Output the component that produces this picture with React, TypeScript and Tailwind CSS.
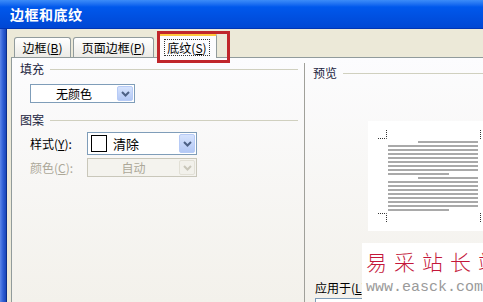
import React from 'react';

const cjk = { fontFamily: '"Noto Sans CJK SC", "Liberation Sans", sans-serif' };

function Chevron({ muted = false }: { muted?: boolean }) {
  return (
    <svg width="9" height="6" viewBox="0 0 9 6">
      <polyline
        points="1,1 4.5,4.5 8,1"
        fill="none"
        stroke={muted ? '#C9C7BA' : '#4D6185'}
        strokeWidth="2"
      />
    </svg>
  );
}

function ArrowButton({ muted = false, h }: { muted?: boolean; h: string }) {
  return (
    <div
      className={`w-[16px] ${h} flex items-center justify-center rounded-[2px] border ${
        muted
          ? 'border-[#E2E0D6] bg-[#F2F1EB]'
          : 'border-[#B7CBF6] bg-gradient-to-b from-[#D6E3FD] to-[#B3C8F5]'
      }`}
    >
      <Chevron muted={muted} />
    </div>
  );
}

function GroupHeader({ title }: { title: string }) {
  return (
    <div className="flex items-center h-[12px] pl-[8px] shrink-0">
      <span className="text-[12px] leading-[12px] text-[#1B2440]">{title}</span>
      <div className="flex-1 h-px bg-[#D0D0BF] ml-[6px]" />
    </div>
  );
}

function PreviewPage() {
  const lines = Array.from({ length: 18 }, (_, i) => {
    const first = i === 0 || i === 9;
    const last = i === 8 || i === 17;
    const x1 = first ? 50 : 20;
    const x2 = last ? 81 : 110;
    return <rect key={i} x={x1} y={20 + i * 4} width={x2 - x1} height="2" fill="#A9A9A9" />;
  });
  return (
    <svg width="115" height="110" viewBox="0 0 115 110" className="bg-white block">
      {lines}
      <g stroke="#333" strokeWidth="1" strokeDasharray="1 1" fill="none">
        <path d="M10 17.5 H18.5 V9" />
        <path d="M112.5 9 V18" />
        <path d="M10 92.5 H18.5 V101" />
        <path d="M112.5 92 V101" />
      </g>
    </svg>
  );
}

export default function App() {
  return (
    <div className="relative w-[483px] h-[302px] overflow-hidden flex flex-col bg-[#ECE9D8]" style={cjk}>
      {/* Title bar */}
      <div className="h-[29px] shrink-0 flex items-center pl-[10px] bg-gradient-to-b from-[#3C8CF8] via-[#0058EC] via-[25%] to-[#0047D4] border-b border-[#0035B5]">
        <span className="text-white font-bold text-[14px] leading-[16px] tracking-[0.5px]">边框和底纹</span>
      </div>

      <div className="flex flex-1 min-h-0">
        {/* Window frame */}
        <div className="w-[7px] shrink-0 bg-gradient-to-r from-[#5C86E8] via-[#2E5FD6] to-[#1A46B8] border-r border-[#0A2E8A]" />

        <div className="flex-1 flex flex-col pl-[4px] min-h-0">
          {/* Tabs */}
          <div className="h-[28px] shrink-0 flex items-end pl-[3px] text-[12px] text-black">
            <div className="w-[57px] h-[20px] flex items-center justify-center border border-b-0 border-[#919B9C] rounded-t-[3px] bg-gradient-to-b from-white to-[#ECEBE6]">
              边框(<u>B</u>)
            </div>
            <div className="w-[81px] h-[20px] ml-[2px] flex items-center justify-center border border-b-0 border-[#919B9C] rounded-t-[3px] bg-gradient-to-b from-white to-[#ECEBE6]">
              页面边框(<u>P</u>)
            </div>
            <div className="w-[60px] h-[25px] ml-[3px] -mb-px relative z-10 flex items-center justify-center border border-b-0 border-[#919B9C] border-t-[3px] border-t-[#FFC73C] rounded-t-[3px] bg-[#FCFCFE]">
              <span className="px-[2px] leading-[15px] border border-dotted border-[#333]">
                底纹(<u>S</u>)
              </span>
            </div>
          </div>

          {/* Panel */}
          <div className="flex-1 min-h-0 overflow-hidden flex border-l border-t border-[#919B9C] bg-gradient-to-b from-[#FCFCFE] to-[#F3F1EB]">
            {/* Left column */}
            <div className="w-[286px] shrink-0 flex flex-col pt-[5px]">
              <GroupHeader title="填充" />
              <div className="ml-[18px] mt-[9px] w-[105px] h-[19px] shrink-0 flex items-center border border-[#7F9DB9] bg-white pr-px">
                <span className="flex-1 text-center text-[12px] leading-[12px]">无颜色</span>
                <ArrowButton h="h-[15px]" />
              </div>

              <div className="mt-[11px]">
                <GroupHeader title="图案" />
              </div>

              <div className="mt-[6px] flex items-center pl-[18px] shrink-0">
                <span className="w-[57px] text-[12px] leading-[12px]">
                  样式(<u>Y</u>):
                </span>
                <div className="w-[110px] h-[23px] flex items-center border border-[#7F9DB9] bg-white pr-px">
                  <div className="ml-[3px] w-[16px] h-[17px] border border-black bg-white" />
                  <span className="ml-[6px] flex-1 text-[13px] leading-[13px]">清除</span>
                  <ArrowButton h="h-[19px]" />
                </div>
              </div>

              <div className="mt-[3px] flex items-center pl-[18px] shrink-0">
                <span className="w-[57px] text-[12px] leading-[12px] text-[#ACA899]">
                  颜色(<u>C</u>):
                </span>
                <div className="w-[110px] h-[19px] flex items-center border border-[#C9C7BA] bg-[#F4F3EE] pr-px">
                  <span className="flex-1 text-center text-[12px] leading-[12px] text-[#ACA899]">自动</span>
                  <ArrowButton muted h="h-[15px]" />
                </div>
              </div>
            </div>

            {/* Separator */}
            <div className="w-[7px] shrink-0 flex pt-[5px]">
              <div className="ml-[6px] w-px bg-[#A0A09A]" />
            </div>

            {/* Right column */}
            <div className="flex-1 flex flex-col pt-[9px]">
              <GroupHeader title="预览" />
              <div className="ml-[63px] mt-[42px] shrink-0">
                <PreviewPage />
              </div>
              <div className="mt-[51px] pl-[10px] text-[12px] leading-[12px] shrink-0 whitespace-nowrap">
                应用于(<u>L</u>):
              </div>
              <div className="ml-[10px] mt-[4px] h-[20px] shrink-0 border border-[#7F9DB9] bg-white" />
            </div>
          </div>
        </div>
      </div>

      {/* Highlight box drawn over the selected tab */}
      <div className="absolute left-[157px] top-[31px] w-[73px] h-[32px] border-[3px] border-[#C0262B] z-20" />

      {/* Watermark */}
      <div className="absolute left-[362px] top-[243px] w-[121px] h-[59px] bg-white flex flex-col pl-[4px] z-20 overflow-hidden">
        <span className="mt-[7px] text-[21px] leading-[22px] tracking-[7px] text-[#C4173A] whitespace-nowrap font-light">
          易采站长站
        </span>
        <span
          className="mt-[8px] text-[15px] leading-[15px] text-[#9A9A9A] whitespace-nowrap"
          style={{ fontFamily: '"Liberation Mono", monospace' }}
        >
          www.easck.com
        </span>
      </div>
    </div>
  );
}
